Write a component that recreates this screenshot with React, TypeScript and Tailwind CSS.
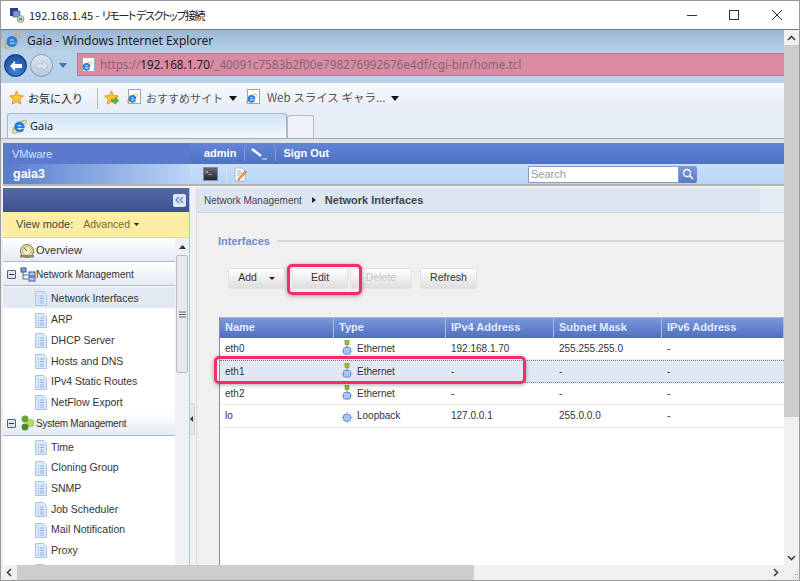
import React from "react";

const sans = "font-['Liberation_Sans',Arial,sans-serif]";

function IeLogo({ size = 16 }: { size?: number }) {
  return (
    <svg width={size} height={size} viewBox="0 0 16 16" className="shrink-0">
      <path d="M1 14.5C0 12 3 6 8 3.5 11 2 14.5.5 15 2c.3 1-.5 2.5-1 3.5" fill="none" stroke="#e8a437" strokeWidth="1.3" />
      <path d="M1 14.5c1 1.5 4 .5 5.5-.5" fill="none" stroke="#e8a437" strokeWidth="1.3" />
      <path d="M8 3a5.5 5.5 0 1 0 5.2 7.3h-3.2A2.4 2.4 0 0 1 5.7 9.5H13.5V8.2A5.5 5.5 0 0 0 8 3Zm-2.3 4.8a2.4 2.4 0 0 1 4.6 0Z" fill="#2a7fd0" fillRule="evenodd" />
    </svg>
  );
}

function PageIe() {
  return (
    <span className="relative inline-block w-[13px] h-[15px] bg-white border border-[#9aa7b8] shrink-0">
      <span className="absolute -left-[2px] top-[3px]"><IeLogo size={11} /></span>
    </span>
  );
}

function Star({ arrow }: { arrow?: boolean }) {
  return (
    <svg width="16" height="16" viewBox="0 0 17 17" className="shrink-0">
      <path d="M8 1l2.2 4.8 5.2.6-3.9 3.5 1.1 5.2L8 12.4l-4.6 2.7 1.1-5.2L.6 6.4l5.2-.6Z" fill="#f8c63d" stroke="#c98a1a" strokeWidth=".8" />
      {arrow && <path d="M8 10h4V8l4 3.2-4 3.2v-2H8Z" fill="#55b848" stroke="#2d8a2a" strokeWidth=".5" />}
    </svg>
  );
}

function Caret() {
  return (
    <svg width="8" height="5" viewBox="0 0 8 5" className="shrink-0"><path d="M0 0h8L4 5Z" fill="#111" /></svg>
  );
}

function DocIcon() {
  return (
    <svg width="12" height="15" viewBox="0 0 12 15" className="shrink-0">
      <path d="M.5.5h8l3 3v11H.5Z" fill="#dce8f8" stroke="#a9c4ea" />
      <path d="M3 5h1M5 5h4M3 7.5h1M5 7.5h4M3 10h1M5 10h4M3 12h1M5 12h4" stroke="#8fb0de" strokeWidth="1" />
    </svg>
  );
}

function Minus() {
  return (
    <span className="w-[9px] h-[9px] border border-[#56606e] rounded-[1px] bg-[#dde6f0] flex items-center justify-center shrink-0">
      <span className="w-[5px] h-px bg-[#333]" />
    </span>
  );
}

function EthIcon() {
  return (
    <svg width="12" height="16" viewBox="0 0 12 16" className="shrink-0">
      <rect x="4" y="0.5" width="4" height="4" fill="#9fc224" stroke="#6b8a18" strokeWidth=".6" />
      <path d="M6 4.5V7" stroke="#7f8fa8" />
      <path d="M6 6v9M0.5 11h11" stroke="#7ba0dc" />
      <rect x="2.5" y="7.5" width="7" height="6.5" rx="1" fill="#a9c5f0" stroke="#6f95d6" />
    </svg>
  );
}

function Loop() {
  return (
    <svg width="12" height="16" viewBox="0 0 12 16" className="shrink-0">
      <path d="M6 4v11M0.5 9.5h11" stroke="#7ba0dc" />
      <rect x="2.5" y="6.5" width="7" height="6.5" rx="1.5" fill="#a9c5f0" stroke="#6f95d6" />
    </svg>
  );
}

function TreeItem({ label, active }: { label: string; active?: boolean }) {
  return (
    <div className={`h-[20.7px] flex items-center pl-[32px] gap-[4px] text-[10.5px] text-[#333] ${active ? "bg-[#e2e9f3] pt-[3px]" : ""}`}>
      <DocIcon />
      <span>{label}</span>
    </div>
  );
}

function Accordion({ label, icon, h = "h-[24px]", text = "text-[10px]", pad = "pt-[2px]" }: { label: string; icon: React.ReactNode; h?: string; text?: string; pad?: string }) {
  return (
    <div className={`${h} ${pad} flex items-center ${text} text-[#333] bg-gradient-to-b from-white to-[#e4ebf5] border-b border-[#a9b8cc]`}>
      <span className="w-[4px] shrink-0" />
      <Minus />
      <span className="w-[4px] shrink-0" />
      {icon}
      <span>{label}</span>
    </div>
  );
}

function Btn({ label, w, children, disabled }: { label: string; w: string; children?: React.ReactNode; disabled?: boolean }) {
  return (
    <div className={`${w} h-[21px] flex items-center justify-center gap-[12px] text-[10.5px] rounded-[1px] border border-[#e4e4e4] bg-gradient-to-b from-white to-[#dedede] ${disabled ? "text-[#c4c4c4]" : "text-[#333]"}`}>
      <span>{label}</span>
      {children}
    </div>
  );
}

const columns = [
  { name: "Name", w: "w-[114px]" },
  { name: "Type", w: "w-[112px]" },
  { name: "IPv4 Address", w: "w-[108px]" },
  { name: "Subnet Mask", w: "w-[108px]" },
  { name: "IPv6 Address", w: "flex-1" },
];

const rows = [
  { name: "eth0", type: "Ethernet", ip: "192.168.1.70", mask: "255.255.255.0", six: "-" },
  { name: "eth1", type: "Ethernet", ip: "-", mask: "-", six: "-", selected: true },
  { name: "eth2", type: "Ethernet", ip: "-", mask: "-", six: "-" },
  { name: "lo", type: "Loopback", ip: "127.0.0.1", mask: "255.0.0.0", six: "-" },
];

export default function App() {
  return (
    <div className="relative w-[800px] h-[581px] overflow-hidden bg-[#f0f0f0] flex flex-col border-t border-x border-b border-[#9a9a9a]">
      {/* RDP title bar */}
      <div className="h-[29px] shrink-0 bg-white flex items-center pl-[8px] border-b border-[#777] font-['Noto_Sans_CJK_JP','Noto_Sans',sans-serif] text-[11px] text-[#222]">
        <svg width="16" height="16" viewBox="0 0 16 16" className="shrink-0">
          <rect x="1" y="1" width="8" height="8" fill="#2a3f9a" />
          <rect x="4" y="4" width="7" height="6" fill="#7a9ad8" stroke="#334" strokeWidth=".5" />
          <circle cx="11.5" cy="12" r="3.5" fill="#c8d0d0" stroke="#666" strokeWidth=".5" />
          <path d="M10 11l3 2M13 11l-3 2" stroke="#2a9a3a" />
        </svg>
        <span className="ml-[4px] [font-feature-settings:'palt']">
          192.168.1.45 - <span className="tracking-[-1.4px]">リモート デスクトップ接続</span>
        </span>
        <div className="ml-auto flex items-center">
          <svg width="12" height="12" viewBox="0 0 12 12" className="mr-[30px]"><path d="M1 6.5h10" stroke="#333" /></svg>
          <svg width="12" height="12" viewBox="0 0 12 12" className="mr-[31px]"><rect x="1.5" y="1.5" width="9" height="9" fill="none" stroke="#333" /></svg>
          <svg width="12" height="12" viewBox="0 0 12 12" className="mr-[16px]"><path d="M1 1l10 10M11 1L1 11" stroke="#333" /></svg>
        </div>
      </div>

      <div className="flex-1 flex min-h-0">
        <div className="w-[783px] flex flex-col min-w-0">
          {/* IE chrome */}
          <div className="h-[22px] shrink-0 flex items-center pl-[3px] gap-[7px] bg-gradient-to-b from-[#9db6d3] to-[#b9d2ea] font-['Noto_Sans',sans-serif] text-[12px] text-[#1c1c1c]">
            <IeLogo size={16} />
            <span>Gaia - Windows Internet Explorer</span>
          </div>
          <div className="h-[31px] shrink-0 flex bg-[#b8d1ea] pl-[3px] pt-px">
            <div className="flex items-center h-[23px] mt-[1px]">
              <div className="w-[23px] h-[23px] rounded-full bg-[radial-gradient(circle_at_50%_70%,#3f8be0,#123c8e)] border border-[#12306e] flex items-center justify-center">
                <svg width="14" height="12" viewBox="0 0 14 12"><path d="M6 1L1 6l5 5V8h7V4H6Z" fill="#fff" /></svg>
              </div>
              <div className="ml-[3px] w-[23px] h-[23px] rounded-full bg-gradient-to-b from-[#dbe6f2] to-[#b8c8da] border border-[#8a9aae] flex items-center justify-center">
                <svg width="14" height="12" viewBox="0 0 14 12"><path d="M8 1l5 5-5 5V8H1V4h7Z" fill="#dce6f0" stroke="#a8b6c6" strokeWidth=".6" /></svg>
              </div>
              <svg width="10" height="6" viewBox="0 0 10 6" className="ml-[5px]"><path d="M1 0h8L5 5Z" fill="#2f7bc2" /></svg>
            </div>
            <div className="ml-[9px] flex-1 h-[23px] bg-[#d88ba3] border-y border-l border-[#b97a90] flex items-center pl-[4px] gap-[5px] font-['Noto_Sans',sans-serif] text-[11.7px] text-[#7f6a74] overflow-hidden">
              <PageIe />
              <span>https://<span className="text-[#1d1d1d]">192.168.1.70</span>/_40091c7583b2f00e798276992676e4df/cgi-bin/home.tcl</span>
            </div>
          </div>
          <div className="h-[56px] shrink-0 bg-gradient-to-b from-[#f7f9fc] via-[#e6edf7] to-[#e6edf7] flex flex-col">
            <div className="h-[30px] flex items-center pl-[8px] font-['Noto_Sans_CJK_JP','Noto_Sans',sans-serif] text-[11px] text-[#222]">
              <Star />
              <span className="ml-[3px]">お気に入り</span>
              <span className="ml-[14px] w-px h-[21px] bg-[#b6bfca]" />
              <span className="ml-[6px]"><Star arrow /></span>
              <span className="ml-[8px]"><PageIe /></span>
              <span className="ml-[5px] text-[#555]">おすすめサイト</span>
              <span className="ml-[6px]"><Caret /></span>
              <span className="ml-[10px]"><PageIe /></span>
              <span className="ml-[7px] text-[#555] text-[11.5px]">Web スライス ギャラ...</span>
              <span className="ml-[6px]"><Caret /></span>
            </div>
            <div className="h-[26px] flex items-end pl-[6px] border-b border-[#a5a9b0]">
              <div className="w-[280px] h-[25px] rounded-t-[3px] border border-b-0 border-[#a9b4c2] bg-gradient-to-b from-[#cfe3f8] to-[#f3f7fc] flex items-center pl-[4px] gap-[3px] font-['Noto_Sans',sans-serif] text-[11px] text-[#222]">
                <IeLogo size={15} />
                <span>Gaia</span>
              </div>
              <div className="w-[27px] h-[23px] rounded-t-[3px] border border-b-0 border-[#b4bcc8] bg-[#eef2f8]" />
            </div>
          </div>

          <div className={`flex-1 min-h-0 flex flex-col border-t-[4px] border-[#dfe3e8] ${sans}`}>
            {/* Console top band */}
            <div className="flex h-[43px] shrink-0 border-b-2 border-[#b5b5b5] ml-[2px]">
              <div className="w-[187px] shrink-0 flex flex-col">
                <div className="h-[21px] bg-[#5a7bcd] flex items-center pl-[9px] pt-[2px] text-[11px] text-[#d7e0f5]">VMware</div>
                <div className="flex-1 bg-gradient-to-r from-[#5a7bcd] to-[#bcd6f6] flex items-center pl-[10px] text-[12.5px] font-bold text-white">gaia3</div>
              </div>
              <div className="flex-1 flex flex-col">
                <div className="h-[21px] bg-gradient-to-b from-[#6384d6] to-[#4f72c4] flex items-center pl-[14px] text-[11px] font-bold text-white">
                  <span>admin</span>
                  <span className="ml-[8px] w-px h-[14px] bg-[#7e98d8]" />
                  <svg width="17" height="12" viewBox="0 0 17 12" className="ml-[6px]"><path d="M1 1l9 7" stroke="#fff" strokeWidth="2.4" /><path d="M11 11h5" stroke="#dfe6f7" /></svg>
                  <span className="ml-[7px] w-px h-[14px] bg-[#7e98d8]" />
                  <span className="ml-[7px]">Sign Out</span>
                </div>
                <div className="flex-1 bg-gradient-to-b from-[#c8dff8] to-[#b9d5f5] flex items-center pl-[13px]">
                  <span className="w-[15px] h-[14px] bg-gradient-to-b from-[#6a6a6a] to-[#1e2a3a] border border-[#889] flex items-start">
                    <span className="text-[6px] leading-[8px] text-white pl-px">&gt;_</span>
                  </span>
                  <span className="ml-[8px] w-px h-[14px] bg-[#dbe8f8]" />
                  <svg width="14" height="15" viewBox="0 0 14 15" className="ml-[7px]">
                    <path d="M1 1h7l3 3v10H1Z" fill="#f4f7fb" stroke="#9fb0c6" strokeWidth=".8" />
                    <path d="M3 4h4M3 6h5M3 8h3" stroke="#a9b6c8" />
                    <path d="M12.5 5L6 12l-2 2 .6-3L11 4Z" fill="#f0a030" stroke="#b86a10" strokeWidth=".6" />
                  </svg>
                  <div className="ml-[280px] flex h-[17px]">
                    <div className="w-[151px] bg-white border border-[#7f9fd0] pl-[2px] text-[11px] leading-[15px] text-[#9a9a9a]">Search</div>
                    <div className="w-[18px] rounded-r-[2px] bg-gradient-to-b from-[#7c9ad8] to-[#5b7cc6] flex items-center justify-center">
                      <svg width="12" height="12" viewBox="0 0 12 12"><circle cx="5" cy="5" r="3.5" fill="none" stroke="#fff" strokeWidth="1.3" /><path d="M7.5 7.5L11 11" stroke="#fff" strokeWidth="1.6" /></svg>
                    </div>
                  </div>
                </div>
              </div>
            </div>

            {/* Body */}
            <div className="flex-1 min-h-0 flex pt-[2px] ml-[2px]">
              {/* Sidebar */}
              <div className="w-[187px] shrink-0 flex flex-col border-r border-[#a9c6ea] overflow-hidden">
                <div className="h-[24px] shrink-0 bg-gradient-to-b from-[#56689f] to-[#3c4f93] flex items-center justify-end pr-[3px]">
                  <span className="w-[13px] h-[13px] rounded-[2px] bg-[#dce8f8] flex items-center justify-center">
                    <svg width="9" height="8" viewBox="0 0 9 8"><path d="M4 1L1 4l3 3M8 1L5 4l3 3" fill="none" stroke="#5b80c4" strokeWidth="1.2" /></svg>
                  </span>
                </div>
                <div className="h-[26px] shrink-0 bg-[#fbeea2] flex items-center pl-[13px] text-[11px] text-[#555] border-b border-[#dcd8b0]">
                  <span className="text-[#444]">View mode:</span>
                  <span className="ml-[10px] text-[10.5px] text-[#776a35]">Advanced</span>
                  <svg width="5" height="3" viewBox="0 0 5 3" className="ml-[4px]"><path d="M0 0h5L2.5 3Z" fill="#222" /></svg>
                </div>
                <div className="flex-1 min-h-0 flex">
                  <div className="w-[172px] bg-white overflow-hidden">
                    <div className="h-[24px] pt-[2px] flex items-center pl-[16px] text-[11px] text-[#333] bg-gradient-to-b from-white to-[#e4ebf5] border-b border-[#a9b8cc] gap-[1px]">
                      <svg width="16" height="14" viewBox="0 0 16 14">
                        <circle cx="8" cy="7" r="6.5" fill="#e6dc8e" stroke="#7d7a50" />
                        <circle cx="8" cy="7" r="4.2" fill="#f4efc8" stroke="#a8a470" strokeWidth=".6" />
                        <path d="M8 7L5 3.5" stroke="#555" />
                        <rect x="1" y="11" width="14" height="2.5" fill="#8d8a66" />
                      </svg>
                      <span>Overview</span>
                    </div>
                    <Accordion
                      label="Network Management"
                      icon={
                        <svg width="16" height="15" viewBox="0 0 16 15" className="shrink-0">
                          <path d="M3 5v7h5M3 8h5" fill="none" stroke="#5a6a80" />
                          <rect x="1" y="1" width="5" height="4" fill="#7aa0dc" stroke="#3a5a96" />
                          <rect x="9" y="5" width="6" height="4" fill="#a9c5ec" stroke="#3a5a96" />
                          <rect x="9" y="10" width="6" height="4" fill="#a9c5ec" stroke="#3a5a96" />
                        </svg>
                      }
                    />
                    <div className="h-px" />
                    <TreeItem label="Network Interfaces" active />
                    <div className="h-[2px]" />
                    {["ARP", "DHCP Server", "Hosts and DNS", "IPv4 Static Routes", "NetFlow Export"].map((t) => (
                      <TreeItem key={t} label={t} />
                    ))}
                    <Accordion
                      label="System Management"
                      h="h-[23px]"
                      pad="pb-[2px]"
                      text="text-[10px] tracking-[-0.25px]"
                      icon={
                        <svg width="16" height="16" viewBox="0 0 16 16" className="shrink-0">
                          <circle cx="5" cy="4" r="3.5" fill="#6aa82e" />
                          <circle cx="10.5" cy="8" r="3.5" fill="#b6df6a" stroke="#6aa82e" strokeWidth=".6" />
                          <circle cx="5" cy="12" r="3.5" fill="#4f8a24" />
                        </svg>
                      }
                    />
                    <div className="h-px" />
                    {["Time", "Cloning Group", "SNMP", "Job Scheduler", "Mail Notification", "Proxy", ""].map((t, i) => (
                      <TreeItem key={i} label={t} />
                    ))}
                  </div>
                  {/* sidebar scrollbar */}
                  <div className="w-[14px] shrink-0 bg-[#f0f0f0] flex flex-col">
                    <div className="h-[17px] flex items-center justify-center">
                      <svg width="7" height="4" viewBox="0 0 7 4"><path d="M0 4l3.5-4L7 4Z" fill="#333" /></svg>
                    </div>
                    <div className="h-[118px] mx-px bg-[#e8e8e8] border border-[#bcbcbc] rounded-[2px] flex items-center justify-center">
                      <svg width="7" height="7" viewBox="0 0 7 7"><path d="M0 1h7M0 3.5h7M0 6h7" stroke="#666" /></svg>
                    </div>
                  </div>
                </div>
              </div>
              {/* Splitter */}
              <div className="w-[6px] shrink-0">
                <div className="mt-[215px] w-[5px] h-[32px] bg-[#e6e6e6] border border-l-0 border-[#d4d4d4] rounded-r-[3px] flex items-center">
                  <svg width="4" height="6" viewBox="0 0 4 6"><path d="M3 0v6L0 3Z" fill="#333" /></svg>
                </div>
              </div>
              {/* Main */}
              <div className="flex-1 min-w-0 flex flex-col border-l border-[#dcdcdc]">
                <div className="h-[25px] shrink-0 flex bg-[#e3ebf4] border-b border-[#d6d6d6]">
                  <div className="w-[563px] bg-[#dce6f2] flex items-center pl-[7px] text-[10px] text-[#444]">
                    <span>Network Management</span>
                    <svg width="4" height="6" viewBox="0 0 4 6" className="ml-[10px]"><path d="M0 0l4 3-4 3Z" fill="#223" /></svg>
                    <span className="ml-[9px] text-[11px] font-bold text-[#444]">Network Interfaces</span>
                  </div>
                </div>
                <div className="pl-[21px] pt-[20px] flex items-center">
                  <span className="text-[11px] font-bold text-[#6f8cd0]">Interfaces</span>
                  <span className="ml-[7px] flex-1 h-[2px] bg-[#d8d8d8]" />
                </div>
                <div className="pl-[31px] pt-[18px] flex items-center">
                  <Btn label="Add" w="w-[57px]">
                    <svg width="6" height="3" viewBox="0 0 6 3"><path d="M0 0h6L3 3Z" fill="#222" /></svg>
                  </Btn>
                  <div className="ml-[7px]"><Btn label="Edit" w="w-[56px]" /></div>
                  <div className="ml-[2px]"><Btn label="Delete" w="w-[62px]" disabled /></div>
                  <div className="ml-[8px]"><Btn label="Refresh" w="w-[57px]" /></div>
                </div>
                <div className="ml-[22px] mt-[28px] flex-1 min-h-0 bg-white border-l border-[#8a8a8a] flex flex-col">
                  <div className="h-[21px] shrink-0 flex bg-gradient-to-b from-[#7b97dc] to-[#4f6fbe] border-t border-[#aab8d8]">
                    {columns.map((c) => (
                      <div key={c.name} className={`${c.w} shrink-0 pl-[5px] border-r border-[#a8bae0] text-[11px] font-bold text-[#e4ebf9] leading-[19px]`}>
                        {c.name}
                      </div>
                    ))}
                  </div>
                  {rows.map((r) => (
                    <div
                      key={r.name}
                      className={`h-[22.5px] flex items-center text-[10px] text-[#333] ${r.selected ? "bg-[#e1e8f3] border-y border-dotted border-[#777]" : "border-b border-[#ececec]"}`}
                    >
                      <div className="w-[114px] shrink-0 pl-[5px]">{r.name}</div>
                      <div className="w-[112px] shrink-0 pl-[7px] flex items-center gap-[4px]">
                        {r.type === "Loopback" ? <Loop /> : <EthIcon />}
                        <span>{r.type}</span>
                      </div>
                      <div className="w-[108px] shrink-0 pl-[5px]">{r.ip}</div>
                      <div className="w-[108px] shrink-0 pl-[5px]">{r.mask}</div>
                      <div className="flex-1 pl-[5px]">{r.six}</div>
                    </div>
                  ))}
                </div>
              </div>
            </div>
          </div>
        </div>

        {/* Outer vertical scrollbar */}
        <div className="flex-1 flex flex-col bg-[#f0f0f0]">
          <div className="h-[15px] flex items-center justify-center">
            <svg width="9" height="6" viewBox="0 0 9 6"><path d="M1 5l3.5-3.5L8 5" fill="none" stroke="#444" strokeWidth="1.6" /></svg>
          </div>
          <div className="h-[372px] bg-[#cdcdcd]" />
          <div className="flex-1" />
          <div className="h-[15px] flex items-center justify-center">
            <svg width="9" height="6" viewBox="0 0 9 6"><path d="M1 1l3.5 3.5L8 1" fill="none" stroke="#444" strokeWidth="1.6" /></svg>
          </div>
        </div>
      </div>

      {/* Outer horizontal scrollbar */}
      <div className="h-[15px] shrink-0 bg-[#f0f0f0] flex items-center">
        <div className="w-[16px] flex justify-center">
          <svg width="6" height="9" viewBox="0 0 6 9"><path d="M5 1L1.5 4.5 5 8" fill="none" stroke="#444" strokeWidth="1.6" /></svg>
        </div>
        <div className="w-[457px] h-full bg-[#cdcdcd]" />
        <div className="flex-1" />
        <svg width="6" height="9" viewBox="0 0 6 9"><path d="M1 1l3.5 3.5L1 8" fill="none" stroke="#444" strokeWidth="1.6" /></svg>
        <svg width="8" height="8" viewBox="0 0 8 8" className="ml-[12px] mt-[4px]">
          <path d="M6 0h1v1H6ZM4 3h1v1H4ZM6 3h1v1H6ZM2 6h1v1H2ZM4 6h1v1H4ZM6 6h1v1H6Z" fill="#aaa" />
        </svg>
      </div>

      {/* Annotation highlights */}
      <div className="absolute left-[286px] top-[263px] w-[75px] h-[31px] rounded-[5px] border-[3px] border-[#ee2f6c] shadow-[0_1px_4px_rgba(0,0,0,0.35)]" />
      <div className="absolute left-[213px] top-[355px] w-[312px] h-[28px] rounded-[5px] border-[3px] border-[#ee2f6c] shadow-[0_1px_4px_rgba(0,0,0,0.35)]" />
    </div>
  );
}
